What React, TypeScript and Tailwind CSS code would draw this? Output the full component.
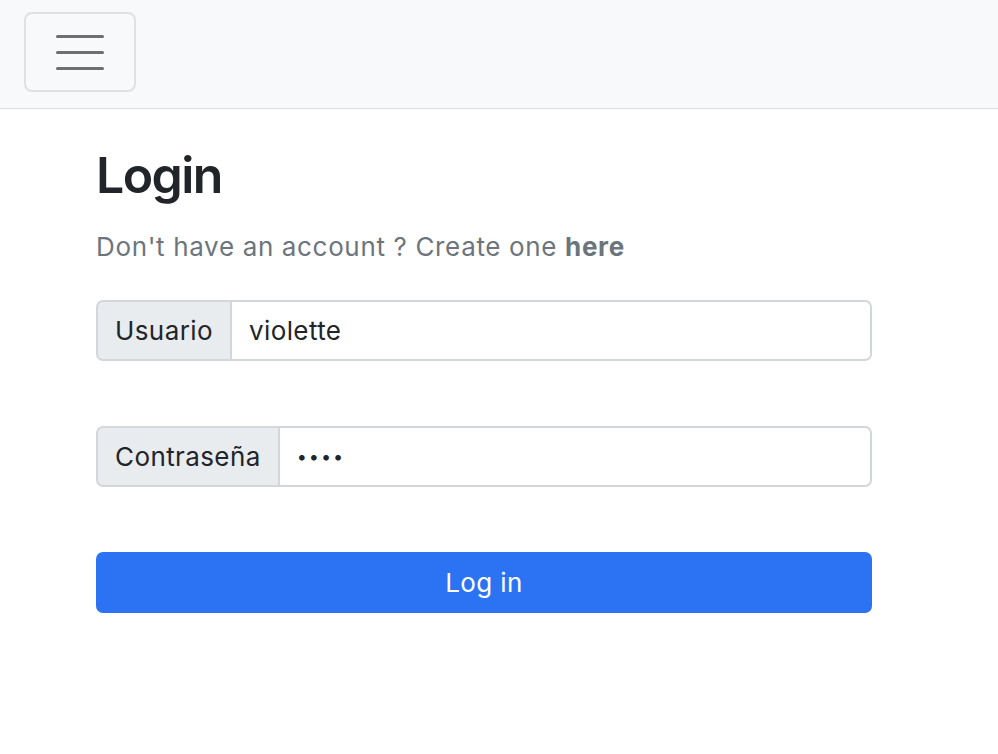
import React from 'react';

const App: React.FC = () => {
  return (
    <div className="min-h-[754px] bg-white font-['Inter','Liberation_Sans',sans-serif] text-[#212529]">
      {/* Navbar */}
      <nav className="h-[109px] border-b border-[#dcdde0] bg-[#f8f9fa] pl-[24px] pt-[12px]">
        <button
          type="button"
          className="flex h-[80px] w-[112px] flex-col items-center justify-center gap-[13px] rounded-[8px] border-2 border-[#dfe0e2]"
        >
          <span className="block h-[3px] w-[48px] rounded-full bg-[#6e6f71]" />
          <span className="block h-[3px] w-[48px] rounded-full bg-[#6e6f71]" />
          <span className="block h-[3px] w-[48px] rounded-full bg-[#6e6f71]" />
        </button>
      </nav>

      <main className="w-[776px] ml-[96px]">
        <h1 className="mt-[36px] text-[50px] leading-[60px] font-semibold tracking-[-1.6px]">Login</h1>
        <p className="mt-[23px] text-[26px] leading-[38px] tracking-[0.65px] text-[#6c757d]">
          Don't have an account ? Create one <a className="font-bold">here</a>
        </p>

        <form className="mt-[34px] flex flex-col gap-[65px]">
          <div className="flex h-[61px] text-[26px] tracking-[0.4px]">
            <span className="flex items-center rounded-l-[7px] border-2 border-[#d3d6da] bg-[#e9ecef] px-[17px]">
              Usuario
            </span>
            <input
              readOnly
              value="violette"
              className="min-w-0 flex-1 rounded-r-[7px] border-2 border-l-0 border-[#d3d6da] bg-white px-[17px] text-[#212529] outline-none"
            />
          </div>

          <div className="flex h-[61px] text-[26px] tracking-[0.4px]">
            <span className="flex items-center rounded-l-[7px] border-2 border-[#d3d6da] bg-[#e9ecef] px-[17px]">
              Contraseña
            </span>
            <input
              readOnly
              type="password"
              value="1234"
              className="min-w-0 flex-1 rounded-r-[7px] border-2 border-l-0 border-[#d3d6da] bg-white px-[17px] text-[18px] tracking-[2px] text-[#212529] outline-none"
            />
          </div>

          <button
            type="button"
            className="h-[61px] w-full rounded-[7px] bg-[#2c73f4] text-[26px] tracking-[0.4px] text-white"
          >
            Log in
          </button>
        </form>
      </main>
    </div>
  );
};

export default App;
